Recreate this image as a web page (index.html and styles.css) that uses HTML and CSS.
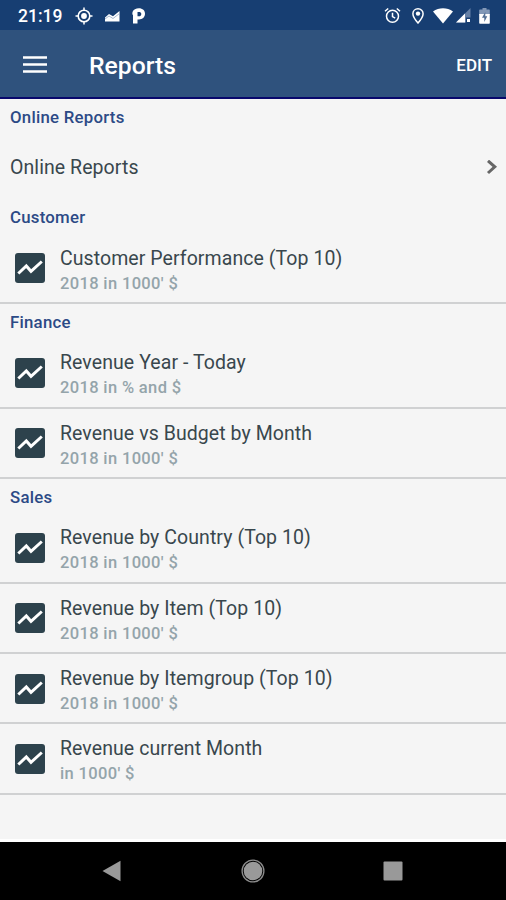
FILE: index.html
```html
<!DOCTYPE html>
<html lang="en">
<head>
<meta charset="utf-8">
<title>Reports</title>
<link rel="stylesheet" href="styles.css">
</head>
<body>
<svg class="defs" aria-hidden="true">
  <symbol id="chart" viewBox="0 0 30 30">
    <rect width="30" height="30" rx="3" fill="#2d424c"/>
    <path d="M3.3 20.5 11.3 13 16 18.3 26.8 8.5" fill="none" stroke="#fff" stroke-width="3"/>
  </symbol>
</svg>
<div class="screen">
  <div class="status">
    <span class="clock">21:19</span>
    <svg class="target" width="18" height="18" viewBox="0 0 18 18" fill="none" stroke="#fff"><circle cx="9" cy="9" r="5.8" stroke-width="1.6"/><circle cx="9" cy="9" r="2.9" fill="#fff" stroke="none"/><path d="M9 .5v3M9 14.5v3M.5 9h3M14.5 9h3" stroke-width="1.5"/></svg>
    <svg class="area" width="15" height="11" viewBox="0 0 15 11"><path d="M0 6.5 4 3l4 2.3L14.5 0v10.5H0Z" fill="#fff"/><path d="M0 8 4 5l4 2.5L14.5 2.5" fill="none" stroke="#8fa5c2" stroke-width=".8"/></svg>
    <svg class="park" width="14" height="16" viewBox="0 0 14 16"><path fill="#fff" fill-rule="evenodd" d="M.5 4C1.500 1.500 4 .3 6.800.3c3.900 0 6.200 2.300 6.200 5.500 0 3.500-2.600 5.700-6 5.700H5.500v4H1V7L.3 6.300ZM5.500 4v4.200h1.300c1.500 0 2.500-.8 2.500-2.300S8.300 4 6.800 4Z"/></svg>
    <span class="spacer"></span>
    <svg class="alarm" width="17" height="17" viewBox="0 0 17 17" fill="none" stroke="#fff" stroke-width="1.5"><circle cx="8.5" cy="9.3" r="6"/><path d="M8.5 5.8v3.8l2.7 1.5M1 4.3l3.2-2.8M16 4.3l-3.2-2.8"/></svg>
    <svg class="pin" width="12" height="16" viewBox="0 0 12 16"><path d="M6 .8C3.100.8 .9 3 .9 5.800 .9 9.300 6 15 6 15s5.100-5.700 5.100-9.200C11.100 3 8.900.8 6 .8Z" fill="none" stroke="#fff" stroke-width="1.500"/><circle cx="6" cy="5.600" r="2.200" fill="#fff"/></svg>
    <svg class="wifi" width="20" height="16" viewBox="0 0 20 16"><path d="M0 3.500C6-.8 14-.8 20 3.500L10 15.500Z" fill="#fff"/></svg>
    <svg class="signal" width="15" height="15" viewBox="0 0 15 15"><path d="M14.500 0v14.500H0Z" fill="#647fa5"/><path d="M9 5.500v9H0Z" fill="#fff"/><path d="M10 9.500h5V15h-5Z" fill="#173e72"/><path d="M11 11h3v3h-3Z" fill="#fff"/></svg>
    <svg class="battery" width="11" height="16" viewBox="0 0 11 16"><path d="M3.500 0h4v1.500H10q.8 0 .8.800V7H.2V2.300q0-.8.8-.8h2.500Z" fill="#8298b7"/><path d="M.2 6h10.600v9q0 .8-.8.800H1q-.8 0-.8-.8Z" fill="#fff"/><path d="M6.300 4 3 9.700h2.300V14L8.300 8.300H6.300Z" fill="#536f94"/></svg>
  </div>
  <header class="toolbar">
    <svg class="burger" width="24" height="17" viewBox="0 0 24 17"><path d="M0 1.500h24M0 8.500h24M0 15.500h24" stroke="#fff" stroke-width="2.700"/></svg>
    <h1>Reports</h1>
    <span class="edit">EDIT</span>
  </header>
  <main class="list">
    <h2>Online Reports</h2>
    <div class="link"><span class="name">Online Reports</span><svg width="12" height="16" viewBox="0 0 12 16"><path d="m2 .8 6.800 6L2 13" fill="none" stroke="#666" stroke-width="3"/></svg></div>
    <h2>Customer</h2>
    <div class="row"><svg class="icon"><use href="#chart"/></svg><div><div class="name">Customer Performance (Top 10)</div><div class="sub">2018 in 1000' $</div></div></div>
    <h2>Finance</h2>
    <div class="row"><svg class="icon"><use href="#chart"/></svg><div><div class="name">Revenue Year - Today</div><div class="sub">2018 in % and $</div></div></div>
    <div class="row"><svg class="icon"><use href="#chart"/></svg><div><div class="name">Revenue vs Budget by Month</div><div class="sub">2018 in 1000' $</div></div></div>
    <h2>Sales</h2>
    <div class="row"><svg class="icon"><use href="#chart"/></svg><div><div class="name">Revenue by Country (Top 10)</div><div class="sub">2018 in 1000' $</div></div></div>
    <div class="row"><svg class="icon"><use href="#chart"/></svg><div><div class="name">Revenue by Item (Top 10)</div><div class="sub">2018 in 1000' $</div></div></div>
    <div class="row"><svg class="icon"><use href="#chart"/></svg><div><div class="name">Revenue by Itemgroup (Top 10)</div><div class="sub">2018 in 1000' $</div></div></div>
    <div class="row"><svg class="icon"><use href="#chart"/></svg><div><div class="name">Revenue current Month</div><div class="sub">in 1000' $</div></div></div>
  </main>
  <nav class="navbar">
    <svg width="20" height="22" viewBox="0 0 20 22"><path d="M.5 11 18.500 .8v20.400Z" fill="#999"/></svg>
    <svg width="24" height="24" viewBox="0 0 24 24"><circle cx="12" cy="12" r="10.900" fill="none" stroke="#8c8c8c" stroke-width="1.300"/><circle cx="12" cy="12" r="9.300" fill="#999"/></svg>
    <svg width="20" height="20" viewBox="0 0 20 20"><rect x=".5" y=".5" width="19" height="19" rx="1" fill="#999"/></svg>
  </nav>
</div>
</body>
</html>
```
FILE: styles.css
```css
* { box-sizing: border-box; }
body { margin: 0; font-family: Roboto, "Liberation Sans", sans-serif; }
svg { display: block; flex: none; }
.defs { position: absolute; width: 0; height: 0; }
.screen { width: 506px; height: 900px; display: flex; flex-direction: column; background: #f5f5f5; overflow: hidden; }
.status { height: 30px; flex: none; display: flex; align-items: center; background: #173e72; padding: 1px 16px 0 18px; }
.clock { width: 57px; color: #fff; font-size: 17.5px; font-weight: 500; line-height: 28px; }
.area { margin-left: 12px; margin-top: 2px; }
.park { margin-left: 12px; }
.spacer { flex: 1; }
.pin { margin-left: 11px; }
.wifi { margin-left: 9px; }
.signal { margin-left: 3px; }
.battery { margin-left: 8px; }
.toolbar { height: 69px; flex: none; display: flex; align-items: center; background: #2f527d; border-bottom: 2px solid #08086c; padding: 2px 14px 0 23px; color: #fff; }
.toolbar h1 { margin: 2px auto 0 42px; font-size: 24.7px; font-weight: 500; line-height: 32px; }
.edit { font-size: 17px; font-weight: 500; }
.list { flex: 1; border-bottom: 3px solid #fff; }
h2 { margin: 0; height: 34.4px; padding: 7.6px 10px 0; font-size: 16.8px; font-weight: 500; line-height: 20px; letter-spacing: .25px; color: #2c4a86; }
.link { height: 66px; padding: 4px 8px 0 10px; display: flex; align-items: center; justify-content: space-between; }
.name { font-size: 19.5px; line-height: 26px; letter-spacing: .07px; color: #39474d; white-space: nowrap; }
.row { height: 70.3px; display: flex; padding: 11.8px 15px 0; gap: 15px; border-bottom: 2px solid #d0d1d2; }
.icon { width: 30px; height: 30px; margin-top: 7.7px; }
.sub { font-size: 16.5px; font-weight: 500; line-height: 24px; letter-spacing: .35px; color: #94a4aa; }
.navbar { height: 58px; flex: none; display: flex; align-items: center; background: #000; padding: 0 103px 0 102px; justify-content: space-between; }
```
